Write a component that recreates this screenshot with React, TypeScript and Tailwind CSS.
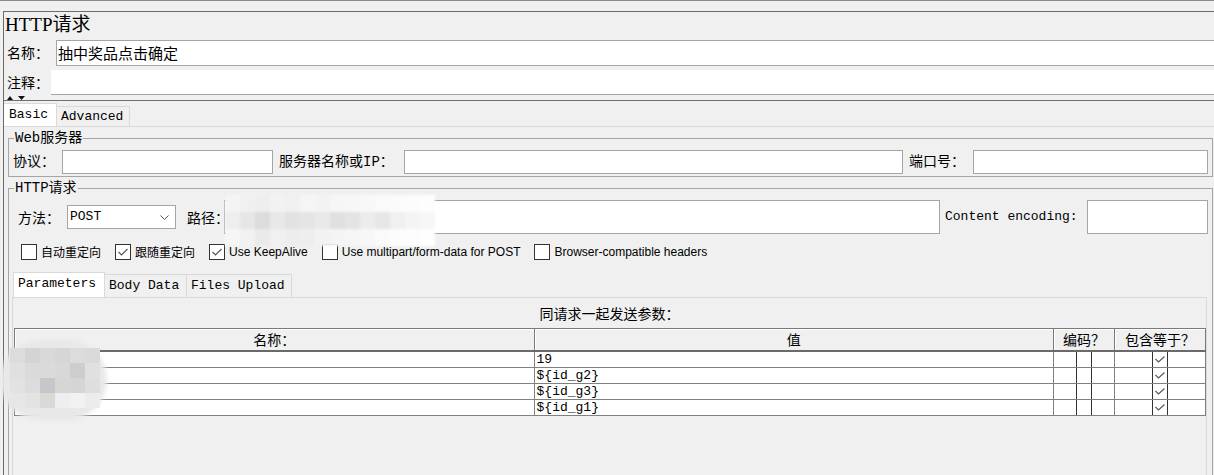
import React from 'react';

const cjk = '"Noto Sans CJK SC", sans-serif';
const mono = '"Liberation Mono", "Noto Sans CJK SC", monospace';
const sans = '"Liberation Sans", "Noto Sans CJK SC", sans-serif';
const serif = '"Liberation Serif", "Noto Sans CJK SC", serif';

function Check({ checked }: { checked?: boolean }) {
  return (
    <span className="inline-flex h-[16px] w-[16px] shrink-0 items-center justify-center border border-[#333333] bg-white">
      {checked && (
        <svg width="12" height="10" viewBox="0 0 12 10">
          <polyline points="1.5,5 4.5,8 10.5,2" fill="none" stroke="#555555" strokeWidth="1.1" />
        </svg>
      )}
    </span>
  );
}

function CheckItem({ label, checked, latin }: { label: string; checked?: boolean; latin?: boolean }) {
  return (
    <div className="flex items-center gap-[4px]">
      <Check checked={checked} />
      <span className="whitespace-nowrap text-[12px] leading-[16px] text-black" style={{ fontFamily: latin ? sans : cjk }}>
        {label}
      </span>
    </div>
  );
}

const nameBlur = [
  ['#dcdcdc', '#d4d4d4', '#d9d9d9', '#d6d6d6', '#dcdcdc', '#dadada'],
  ['#e0e0e0', '#dadada', '#d9dbdb', '#d8d8d8', '#cdcdcd', '#e0e0e0'],
  ['#e2e2e2', '#dcdcdc', '#c6c7cb', '#d6d6d6', '#d5d5d5', '#dedede'],
  ['#e6e6e6', '#e3e3e3', '#d9d9d6', '#eeeef0', '#f2f2f2', '#ececec'],
];

const pathBlur = [
  ['#f4f4f4', '#f0f0f0', '#eeeeee', '#f2f2f2', '#f0f0f0', '#f5f5f5', '#f3f3f3', '#f6f6f6', '#f7f7f7', '#f8f8f8', '#fafafa', '#fbfbfb', '#fcfcfc', '#fdfdfd'],
  ['#eeeeee', '#e6e6e6', '#dcdcdc', '#e8e8e8', '#e2e2e2', '#e5e5e5', '#e9e9e9', '#e0e0e0', '#e4e4e4', '#ececec', '#e7e7e7', '#f0f0f0', '#f4f4f4', '#f7f7f7'],
  ['#f6f6f6', '#f1f1f1', '#eaeaea', '#f0f0f0', '#ededed', '#eeeeee', '#f2f2f2', '#f4f4f4', '#f5f5f5', '#f7f7f7', '#fafafa', '#fcfcfc', '#fdfdfd', '#fefefe'],
];

const rows = ['19', '${id_g2}', '${id_g3}', '${id_g1}'];

export default function App() {
  return (
    <div className="relative h-[475px] w-[1214px] overflow-hidden bg-[#f0f0f0] text-black" style={{ fontFamily: cjk }}>
      <div className="h-[11px] border-t border-[#8a8a8a]" />
      <div className="ml-[3px] w-[1230px] border-l border-t border-[#6b6b6b]">
        {/* title */}
        <div className="h-[28px] pl-[1px] pt-[1px] text-[19px] leading-[24px]" style={{ fontFamily: serif }}>
          HTTP请求
        </div>

        {/* name */}
        <div className="flex h-[26px]">
          <div className="w-[52px] whitespace-nowrap pl-[3px] text-[14px] leading-[24px]">名称：</div>
          <div className="flex-1 border border-[#a5a5a5] bg-white pl-[1px] text-[15px] leading-[23px]">抽中奖品点击确定</div>
        </div>

        {/* comment */}
        <div className="mt-[4px] flex h-[25px]">
          <div className="w-[47px] whitespace-nowrap pl-[3px] text-[14px] leading-[24px]">注释：</div>
          <div className="flex-1 border-b border-[#a5a5a5] bg-white" />
        </div>

        {/* splitter arrows */}
        <div className="flex h-[5px] items-end gap-[5px] pl-[3px]">
          <svg width="6" height="4" viewBox="0 0 6 4">
            <polygon points="0,4 3,0 6,4" fill="#111" />
          </svg>
          <svg width="7" height="4" viewBox="0 0 7 4">
            <polygon points="0,0 7,0 3.5,4" fill="#111" />
          </svg>
        </div>

        {/* tabs */}
        <div className="flex h-[26px] items-end border-t border-[#707070]">
          <div className="h-[23px] w-[53px] border-r border-t border-[#d9d9d9] bg-white pl-[5px] text-[13px] leading-[21px]" style={{ fontFamily: mono }}>
            Basic
          </div>
          <div className="h-[20px] w-[73px] border-r border-t border-[#d9d9d9] pl-[4px] text-[13px] leading-[20px]" style={{ fontFamily: mono }}>
            Advanced
          </div>
        </div>

        <div className="border-t border-[#d9d9d9] pt-[3px]">
          {/* Web server */}
          <fieldset className="ml-[4px] w-[1205px] border border-[#a5a5a5] pb-[2px]">
            <legend className="ml-[5px] px-[1px] text-[14px] leading-[16px]" style={{ fontFamily: mono }}>
              Web服务器
            </legend>
            <div className="mt-[4px] flex h-[24px] items-center whitespace-nowrap pl-[4px] pr-[4px] text-[14px]" style={{ fontFamily: mono }}>
              <span className="w-[49px] shrink-0">协议：</span>
              <div className="h-[24px] w-[211px] shrink-0 border border-[#a5a5a5] bg-white" />
              <span className="ml-[6px] w-[125px] shrink-0">服务器名称或IP：</span>
              <div className="h-[24px] flex-1 border border-[#a5a5a5] bg-white" />
              <span className="ml-[6px] w-[64px] shrink-0">端口号：</span>
              <div className="h-[24px] w-[235px] shrink-0 border border-[#a5a5a5] bg-white" />
            </div>
          </fieldset>

          {/* HTTP request */}
          <fieldset className="ml-[4px] mt-[3px] w-[1205px] border border-[#a5a5a5]">
            <legend className="ml-[5px] px-[1px] text-[14px] leading-[16px]" style={{ fontFamily: mono }}>
              HTTP请求
            </legend>
            <div className="mt-[4px] flex h-[34px] items-center whitespace-nowrap pl-[9px] pr-[4px] text-[14px]">
              <span className="w-[49px] shrink-0">方法：</span>
              <div className="flex h-[24px] w-[109px] shrink-0 items-center justify-between border border-[#a5a5a5] bg-white pl-[2px] pr-[6px]">
                <span className="text-[13px]" style={{ fontFamily: mono }}>POST</span>
                <svg width="9" height="5" viewBox="0 0 9 5">
                  <polyline points="0.5,0.5 4.5,4.5 8.5,0.5" fill="none" stroke="#555" strokeWidth="1" />
                </svg>
              </div>
              <span className="ml-[11px] w-[37px] shrink-0 overflow-visible">路径：</span>
              <div className="h-[34px] flex-1 border border-[#a5a5a5] bg-white" />
              <span className="ml-[5px] w-[142px] shrink-0 text-[13px]" style={{ fontFamily: mono }}>Content encoding:</span>
              <div className="h-[34px] w-[121px] shrink-0 border border-[#a5a5a5] bg-white" />
            </div>

            <div className="mt-[10px] flex h-[16px] items-center gap-[14px] pl-[12px]">
              <CheckItem label="自动重定向" />
              <CheckItem label="跟随重定向" checked />
              <CheckItem label="Use KeepAlive" checked latin />
              <CheckItem label="Use multipart/form-data for POST" latin />
              <CheckItem label="Browser-compatible headers" latin />
            </div>

            {/* inner tabs */}
            <div className="mt-[12px] flex h-[25px] items-end pl-[4px] text-[13px]" style={{ fontFamily: mono }}>
              <div className="h-[25px] w-[92px] border-l border-r border-t border-[#d9d9d9] bg-white pl-[4px] leading-[22px]">Parameters</div>
              <div className="h-[23px] w-[82px] border-r border-t border-[#d9d9d9] pl-[4px] leading-[22px]">Body Data</div>
              <div className="h-[23px] w-[105px] border-r border-t border-[#d9d9d9] pl-[4px] leading-[22px]">Files Upload</div>
            </div>

            <div className="ml-[3px] h-[190px] w-[1195px] border-l border-r border-t border-[#d9d9d9]">
              <div className="h-[30px] text-center text-[14px] leading-[30px]">同请求一起发送参数：</div>
              <div className="ml-[1px] w-[1192px] border-l border-t border-[#7a7a7a]">
                <div className="flex h-[23px] border-b-2 border-[#6a6a6a] text-[14px] leading-[20px]">
                  <div className="w-[520px] border-r border-[#7a7a7a] text-center shadow-[inset_1px_1px_0_#ffffff]">名称：</div>
                  <div className="w-[520px] border-r border-[#7a7a7a] text-center shadow-[inset_1px_1px_0_#ffffff]">值</div>
                  <div className="w-[61px] border-r border-[#7a7a7a] text-center shadow-[inset_1px_1px_0_#ffffff]">编码？</div>
                  <div className="w-[91px] border-r border-[#7a7a7a] text-center shadow-[inset_1px_1px_0_#ffffff]">包含等于？</div>
                </div>
                {rows.map((v, i) => (
                  <div key={i} className="flex h-[16px] border-b border-[#808080] bg-white">
                    <div className="w-[520px] border-r border-[#808080]" />
                    <div className="w-[520px] border-r border-[#808080] pl-[2px] text-[13px] leading-[15px]" style={{ fontFamily: mono }}>
                      {v}
                    </div>
                    <div className="flex w-[61px] justify-center border-r border-[#808080]">
                      <span className="h-[15px] w-[16px] border-l border-r border-[#333333] bg-white" />
                    </div>
                    <div className="flex w-[91px] justify-center border-r border-[#808080]">
                      <span className="flex h-[15px] w-[16px] items-center justify-center border-l border-r border-[#333333] bg-white">
                        <svg width="12" height="9" viewBox="0 0 12 9">
                          <polyline points="1.5,4 4.5,7 10.5,1.5" fill="none" stroke="#555555" strokeWidth="1.1" />
                        </svg>
                      </span>
                    </div>
                  </div>
                ))}
              </div>
            </div>
          </fieldset>
        </div>
      </div>

      {/* redaction over the path field */}
      <div className="absolute left-[225px] top-[195px] grid grid-cols-[repeat(14,15px)] grid-rows-[repeat(3,17px)] rounded-[14px] blur-[1px]">
        {pathBlur.flat().map((c, i) => (
          <div key={i} style={{ backgroundColor: c }} />
        ))}
      </div>

      {/* redaction over the parameter names */}
      <div className="absolute left-[0px] top-[340px] h-[80px] w-[107px] rounded-[40px] bg-[#e8e8e8] blur-[2px]" />
      <div className="absolute left-[10px] top-[348px] grid grid-cols-[repeat(6,15px)] grid-rows-[repeat(4,15px)]">
        {nameBlur.flat().map((c, i) => (
          <div key={i} style={{ backgroundColor: c }} />
        ))}
      </div>
    </div>
  );
}
